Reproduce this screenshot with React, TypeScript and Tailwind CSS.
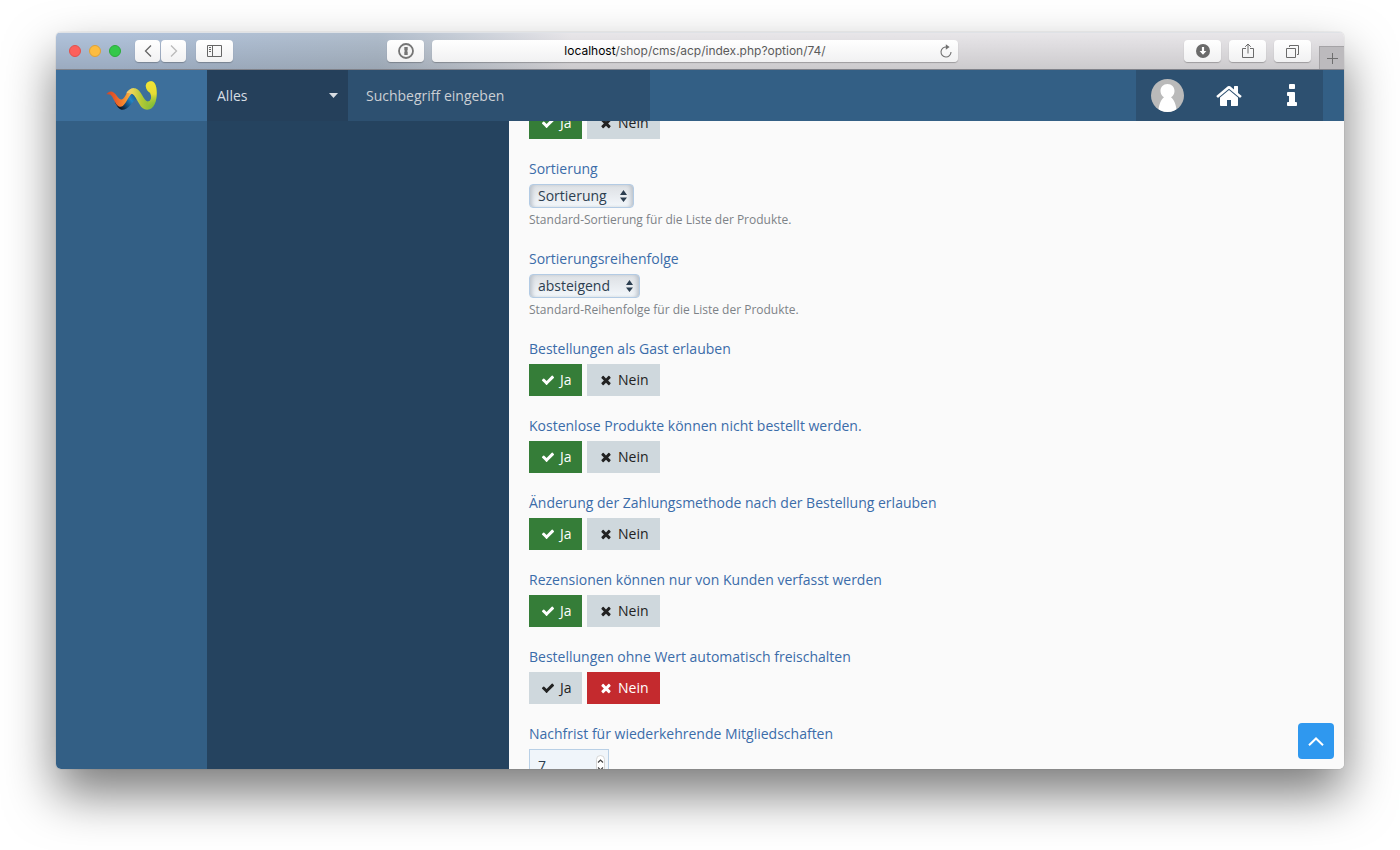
import React, { useState } from "react";

interface ToggleOption {
  id: string;
  label: string;
  value: boolean;
}

interface SelectOption {
  id: string;
  label: string;
  choices: string[];
  description: string;
  width: string;
}

const selectOptions: SelectOption[] = [
  {
    id: "sort-field",
    label: "Sortierung",
    choices: ["Sortierung", "Titel", "Preis"],
    description: "Standard-Sortierung für die Liste der Produkte.",
    width: "w-[105px]",
  },
  {
    id: "sort-order",
    label: "Sortierungsreihenfolge",
    choices: ["absteigend", "aufsteigend"],
    description: "Standard-Reihenfolge für die Liste der Produkte.",
    width: "w-[111px]",
  },
];

const toggleOptions: ToggleOption[] = [
  { id: "guest-orders", label: "Bestellungen als Gast erlauben", value: true },
  {
    id: "free-products",
    label: "Kostenlose Produkte können nicht bestellt werden.",
    value: true,
  },
  {
    id: "change-payment",
    label: "Änderung der Zahlungsmethode nach der Bestellung erlauben",
    value: true,
  },
  {
    id: "customer-reviews",
    label: "Rezensionen können nur von Kunden verfasst werden",
    value: true,
  },
  {
    id: "auto-enable",
    label: "Bestellungen ohne Wert automatisch freischalten",
    value: false,
  },
];

const iconPaths = {
  check:
    "M1671 566q0 40-28 68l-724 724-136 136q-28 28-68 28t-68-28l-136-136-362-362q-28-28-28-68t28-68l136-136q28-28 68-28t68 28l294 295 656-657q28-28 68-28t68 28l136 136q28 28 28 68z",
  times:
    "M1490 1322q0 40-28 68l-136 136q-28 28-68 28t-68-28l-294-294-294 294q-28 28-68 28t-68-28l-136-136q-28-28-28-68t28-68l294-294-294-294q-28-28-28-68t28-68l136-136q28-28 68-28t68 28l294 294 294-294q28-28 68-28t68 28l136 136q28 28 28 68t-28 68l-294 294 294 294q28 28 28 68z",
  home: "M1472 992v480q0 26-19 45t-45 19h-384v-384h-256v384h-384q-26 0-45-19t-19-45v-480q0-1 .5-3t.5-3l575-474 575 474q1 2 1 6zm223-69l-62 74q-8 9-21 11h-3q-13 0-21-7l-692-577-692 577q-12 8-24 7-13-2-21-11l-62-74q-8-10-7-23.5t11-21.5l719-599q32-26 76-26t76 26l244 204v-195q0-14 9-23t23-9h192q14 0 23 9t9 23v408l219 182q10 8 11 21.5t-7 23.5z",
  info: "M1216 1344v128q0 26-19 45t-45 19h-512q-26 0-45-19t-19-45v-128q0-26 19-45t45-19h64v-384h-64q-26 0-45-19t-19-45v-128q0-26 19-45t45-19h384q26 0 45 19t19 45v576h64q26 0 45 19t19 45zm-128-1152v192q0 26-19 45t-45 19h-256q-26 0-45-19t-19-45v-192q0-26 19-45t45-19h256q26 0 45 19t19 45z",
};

const Icon = ({
  name,
  className,
}: {
  name: keyof typeof iconPaths;
  className: string;
}) => (
  <svg viewBox="0 0 1792 1792" fill="currentColor" className={className} aria-hidden="true">
    <path d={iconPaths[name]} />
  </svg>
);

const Logo = () => (
  <svg viewBox="0 0 153 88" className="h-[29px] w-[51px]" aria-hidden="true">
    <defs>
      <linearGradient id="logo-orange" x1="0" y1="0.3" x2="1" y2="0.3">
        <stop offset="0" stopColor="#c9482c" />
        <stop offset="0.3" stopColor="#e85a28" />
        <stop offset="0.6" stopColor="#f4832c" />
        <stop offset="0.8" stopColor="#f6a63c" />
        <stop offset="1" stopColor="#f5d583" />
      </linearGradient>
      <linearGradient id="logo-blue" x1="0" y1="0.8" x2="1" y2="0.2">
        <stop offset="0.1" stopColor="#0a1420" />
        <stop offset="0.4" stopColor="#14507f" />
        <stop offset="0.65" stopColor="#2484c4" />
        <stop offset="1" stopColor="#174a75" />
      </linearGradient>
      <linearGradient id="logo-green" x1="0" y1="0" x2="1" y2="0">
        <stop offset="0" stopColor="#f4c47a" />
        <stop offset="0.2" stopColor="#ebd655" />
        <stop offset="0.5" stopColor="#b3c935" />
        <stop offset="1" stopColor="#6fb83a" />
      </linearGradient>
      <linearGradient id="logo-yellow" x1="0" y1="0" x2="0" y2="1">
        <stop offset="0" stopColor="#f3e437" />
        <stop offset="0.45" stopColor="#e6dc35" />
        <stop offset="0.9" stopColor="#a9cc36" stopOpacity="0" />
      </linearGradient>
    </defs>
    <path
      d="M26 64C38 70 50 74 58 62C64 52 70 36 84 32L98 56C88 54 82 64 74 72C64 84 56 88 46 87C38 86 32 76 26 64Z"
      fill="url(#logo-blue)"
    />
    <path
      d="M0 40C6 34 13 29 21 34C32 41 36 56 46 56C58 56 62 22 84 22L82 36C68 42 64 64 50 76C44 80 37 79 31 71C23 60 18 42 10 41C6 40 3 40 0 40Z"
      fill="url(#logo-orange)"
    />
    <path
      d="M60 38C66 26 76 20 88 22C106 26 112 60 126 62C136 62 139 50 133 36C126 32 119 22 120 13C122 3 130 0 138 1C150 4 153 20 153 36C153 62 146 87 124 87C103 87 98 60 84 43C77 37 70 35 60 38Z"
      fill="url(#logo-green)"
    />
    <path
      d="M126 62C136 62 139 50 133 36C126 32 119 22 120 13C122 3 130 0 138 1C150 4 153 20 153 36C153 62 146 87 124 87Z"
      fill="url(#logo-yellow)"
    />
  </svg>
);

const ToolbarButton = ({
  label,
  className,
  children,
}: {
  label: string;
  className: string;
  children: React.ReactNode;
}) => (
  <button
    type="button"
    aria-label={label}
    className={`flex h-[22px] items-center justify-center rounded bg-linear-to-b from-white to-[#f1f1f2] text-[#6b6b6b] shadow-[0_1px_1px_rgba(0,0,0,0.25)] ${className}`}
  >
    {children}
  </button>
);

const BrowserToolbar = () => (
  <div className="flex h-[38px] shrink-0 items-center border-t border-b border-t-[#dfe2e6] border-b-[#80828a] bg-linear-to-r from-[#b0c2da] from-5% via-[#b0bdcc] via-25% to-[#e8e6e9] to-40%">
    <div className="flex h-full w-full items-center bg-linear-to-b from-transparent to-black/12">
      <div className="flex w-[331px] shrink-0 items-center pl-[13px]">
        <div className="flex gap-2">
          <span className="size-3 rounded-full border border-[#e2514c] bg-[#fc605c]" />
          <span className="size-3 rounded-full border border-[#dfa136] bg-[#fdbc40]" />
          <span className="size-3 rounded-full border border-[#2bac3b] bg-[#34c84a]" />
        </div>
        <div className="ml-[14px] flex gap-px">
          <ToolbarButton label="Zurück" className="w-[25px]">
            <svg viewBox="0 0 8 12" className="h-3 w-2" fill="none" stroke="#666" strokeWidth="1.3">
              <path d="M7 .5 1.5 6 7 11.5" />
            </svg>
          </ToolbarButton>
          <ToolbarButton label="Vorwärts" className="w-[25px]">
            <svg viewBox="0 0 8 12" className="h-3 w-2" fill="none" stroke="#bababa" strokeWidth="1.3">
              <path d="M1 .5 6.5 6 1 11.5" />
            </svg>
          </ToolbarButton>
        </div>
        <ToolbarButton label="Seitenleiste" className="ml-[10px] w-[37px]">
          <svg viewBox="0 0 15 12" className="h-3 w-[15px]" fill="none" stroke="#666">
            <path d="M.5.5h14v11H.5zM5.5.5v11M2 2.5h2M2 4.5h2M2 6.5h2" />
          </svg>
        </ToolbarButton>
      </div>

      <div className="flex flex-1 items-center gap-2">
        <ToolbarButton label="Passwörter" className="w-[37px]">
          <svg viewBox="0 0 16 16" className="size-4">
            <circle cx="8" cy="8" r="7" fill="#f4f4f4" stroke="#757575" strokeWidth="1.8" />
            <path d="M6.3 4h3.4v3.2l-.7.8.7.8V12H6.3V8.8L7 8l-.7-.8z" fill="#757575" />
          </svg>
        </ToolbarButton>
        <div className="flex h-[22px] flex-1 items-center rounded bg-linear-to-b from-white to-[#f1f1f2] pr-1 pl-5 shadow-[0_1px_1px_rgba(0,0,0,0.25)]">
          <div className="flex-1 text-center font-[Inter] text-xs text-[#5b5b5b]">
            <span className="text-black">localhost</span>
            /shop/cms/acp/index.php?option/74/
          </div>
          <button type="button" aria-label="Neu laden" className="flex w-4 justify-center">
            <svg viewBox="0 0 12 14" className="h-[14px] w-3" fill="none" stroke="#707070" strokeWidth="1.1">
              <path d="M6.5 3A5 5 0 1 0 11 8" />
              <path d="M5.8.3 9.6 3 5.8 5.7z" fill="#707070" stroke="none" />
            </svg>
          </button>
        </div>
      </div>

      <div className="flex w-[386px] shrink-0 items-center justify-end gap-2 self-stretch">
        <ToolbarButton label="Downloads" className="w-[37px]">
          <svg viewBox="0 0 14 14" className="size-[14px]">
            <circle cx="7" cy="7" r="7" fill="#6b6b6b" />
            <path d="M5.9 3h2.2v4h2.3L7 10.8 3.6 7h2.3z" fill="#fff" />
          </svg>
        </ToolbarButton>
        <ToolbarButton label="Teilen" className="w-[37px]">
          <svg viewBox="0 0 12 16" className="h-4 w-3" fill="none" stroke="currentColor">
            <path d="M4 5.5H.5v9h11v-9H8M6 10.5V1M3.200 3.800 6 1l2.800 2.800" />
          </svg>
        </ToolbarButton>
        <ToolbarButton label="Tabs" className="w-[37px]">
          <svg viewBox="0 0 13 13" className="size-[13px]" fill="none" stroke="currentColor">
            <path d="M.5 3.5h9v9h-9zM3.5 2V.5h9v9H11" />
          </svg>
        </ToolbarButton>
        <button
          type="button"
          aria-label="Neuer Tab"
          className="flex h-[23px] w-[25px] items-center justify-center self-end border-t border-l border-[#a5a3a6] bg-[#bcbabd]"
        >
          <svg viewBox="0 0 11 11" className="size-[11px]" stroke="#6e6e6e">
            <path d="M5.5 0v11M0 5.5h11" />
          </svg>
        </button>
      </div>
    </div>
  </div>
);

const PageHeader = () => (
  <header className="flex h-[51px] shrink-0 bg-[#335f85] text-sm text-[#d8dde3]">
    <a
      href="#"
      aria-label="WoltLab"
      className="flex w-[151px] shrink-0 items-center justify-center bg-[#3d6f9b]"
    >
      <Logo />
    </a>
    <button
      type="button"
      className="flex w-[141px] shrink-0 items-center justify-between bg-[#25405b] px-[10px]"
    >
      Alles
      <svg viewBox="0 0 9 5" className="h-[5px] w-[9px]" fill="currentColor">
        <path d="M0 0h9L4.5 5z" />
      </svg>
    </button>
    <input
      type="search"
      aria-label="Suche"
      placeholder="Suchbegriff eingeben"
      className="w-[302px] bg-[#2d5070] px-[18px] outline-none placeholder:text-[#cbcfd4]"
    />
    <nav className="mr-[21px] ml-auto flex w-[187px] items-center bg-[#2d5070] text-white">
      <button type="button" aria-label="Benutzer" className="flex flex-1 justify-center">
        <svg viewBox="0 0 33 33" className="size-[33px]">
          <clipPath id="avatar-clip">
            <circle cx="16.5" cy="16.5" r="16.5" />
          </clipPath>
          <g clipPath="url(#avatar-clip)">
            <path d="M0 0h33v33H0z" fill="#bababa" />
            <path
              d="M16.5 5c-4.200 0-7 3-7 7 0 3 1.500 5.200 3.500 6.300C10 20.500 7.700 26 7.200 33h18.600c-.5-7-2.800-12.500-5.800-14.700 2-1.100 3.500-3.300 3.500-6.300 0-4-2.800-7-7-7z"
              fill="#fff"
            />
          </g>
        </svg>
      </button>
      <a href="#" aria-label="Startseite" className="flex flex-1 justify-center">
        <Icon name="home" className="size-7" />
      </a>
      <a href="#" aria-label="Informationen" className="flex flex-1 justify-center">
        <Icon name="info" className="size-7" />
      </a>
    </nav>
  </header>
);

const YesNo = ({ id, initial }: { id: string; initial: boolean }) => {
  const [enabled, setEnabled] = useState(initial);

  return (
    <div className="flex gap-[5px] text-sm text-[#222]">
      <label
        className={`relative flex h-8 w-[53px] cursor-pointer items-center gap-[5px] pl-3 ${
          enabled ? "bg-[#357d38] text-white" : "bg-[#cfd8dd]"
        }`}
      >
        <input
          type="radio"
          name={id}
          checked={enabled}
          onChange={() => setEnabled(true)}
          className="sr-only"
        />
        <Icon name="check" className="size-[14px]" />
        Ja
      </label>
      <label
        className={`relative flex h-8 w-[73px] cursor-pointer items-center gap-[5px] pl-3 ${
          enabled ? "bg-[#cfd8dd]" : "bg-[#c42a2e] text-white"
        }`}
      >
        <input
          type="radio"
          name={id}
          checked={!enabled}
          onChange={() => setEnabled(false)}
          className="sr-only"
        />
        <Icon name="times" className="size-[14px]" />
        Nein
      </label>
    </div>
  );
};

const SelectRow = ({ option }: { option: SelectOption }) => (
  <div>
    <label htmlFor={option.id} className="mb-[5px] block text-sm leading-5 text-[#3b6ca9]">
      {option.label}
    </label>
    <div className={`relative ${option.width}`}>
      <select
        id={option.id}
        className="block h-6 w-full appearance-none rounded border border-[#b3cbe4] bg-linear-to-b from-[#dde0e4] to-[#f3f7fb] px-2 text-sm leading-5 text-[#2c3e50] shadow-[inset_4px_0_4px_-2px_#b9c0c9,inset_-4px_0_4px_-2px_#b9c0c9]"
      >
        {option.choices.map((choice) => (
          <option key={choice}>{choice}</option>
        ))}
      </select>
      <svg
        viewBox="0 0 7 12"
        className="pointer-events-none absolute top-[6px] right-[7px] h-3 w-[7px]"
        fill="#2c3e50"
      >
        <path d="M0 5h7L3.5 0zM0 7.5h7L3.5 12z" />
      </svg>
    </div>
    <p className="mt-[3px] text-xs leading-[18px] text-[#7d8287]">{option.description}</p>
  </div>
);

const App = () => {
  return (
    <div className="flex h-screen min-h-[400px] flex-col overflow-hidden bg-white px-14 pt-8 pb-[81px] font-['Open_Sans',sans-serif]">
      <div className="flex min-h-0 flex-1 flex-col rounded-[5px] shadow-[0_25px_50px_rgba(0,0,0,0.52),0_0_1px_rgba(0,0,0,0.4)]">
        <div className="relative flex min-h-0 flex-1 flex-col overflow-hidden rounded-[5px] bg-[#fafafa]">
          <BrowserToolbar />
          <PageHeader />

          <div className="flex min-h-0 flex-1">
            <aside className="w-[151px] shrink-0 bg-[#335f85]" />
            <aside className="w-[302px] shrink-0 bg-[#25435f]" />

            <main className="min-w-0 flex-1 overflow-hidden px-5">
              {/* list is scrolled a little below its first option */}
              <form className="-mt-[14px] flex flex-col gap-5">
                <YesNo id="first-option" initial={true} />

                {selectOptions.map((option) => (
                  <SelectRow key={option.id} option={option} />
                ))}

                {toggleOptions.map((option) => (
                  <div key={option.id} role="radiogroup" aria-labelledby={option.id}>
                    <div id={option.id} className="mb-[5px] text-sm leading-5 text-[#3b6ca9]">
                      {option.label}
                    </div>
                    <YesNo id={`${option.id}-value`} initial={option.value} />
                  </div>
                ))}

                <div>
                  <label
                    htmlFor="grace-period"
                    className="mb-[5px] block text-sm leading-5 text-[#3b6ca9]"
                  >
                    Nachfrist für wiederkehrende Mitgliedschaften
                  </label>
                  <div className="relative w-20">
                    <input
                      id="grace-period"
                      type="number"
                      defaultValue={7}
                      className="block h-8 w-full [appearance:textfield] border border-[#b9d0e6] bg-[#f0f5fa] px-2 text-sm text-[#2c3e50] [&::-webkit-inner-spin-button]:appearance-none"
                    />
                    <svg
                      viewBox="0 0 9 20"
                      className="pointer-events-none absolute top-[6px] right-1 h-5 w-[9px]"
                      fill="none"
                      stroke="#444"
                    >
                      <rect x="0.5" y="0.5" width="8" height="19" rx="4" fill="#fff" stroke="#d5d5d5" />
                      <path d="M2 7.5 4.5 5 7 7.5M2 12.5 4.5 15 7 12.5" strokeWidth="1.2" />
                    </svg>
                  </div>
                </div>
              </form>
            </main>
          </div>

          <button
            type="button"
            aria-label="Nach oben"
            className="absolute right-[10px] bottom-[10px] flex size-9 items-center justify-center rounded-sm bg-[#2f98ef]"
          >
            <svg viewBox="0 0 16 9" className="h-[9px] w-4" fill="none" stroke="#fff" strokeWidth="2">
              <path d="M1 8.3 8 1.5 15 8.3" />
            </svg>
          </button>
        </div>
      </div>
    </div>
  );
};

export default App;
